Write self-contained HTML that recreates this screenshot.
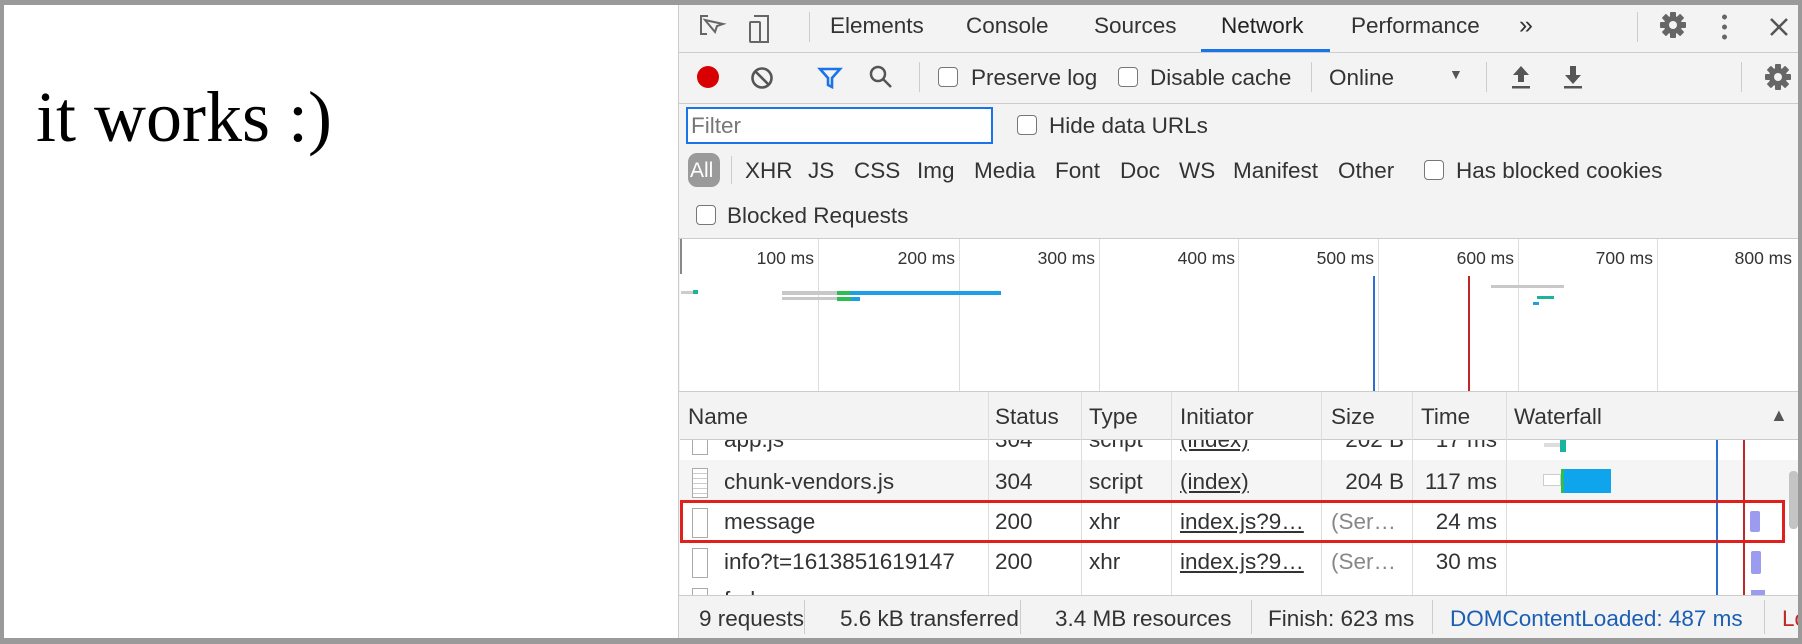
<!DOCTYPE html>
<html><head><meta charset="utf-8"><style>
*{margin:0;padding:0;box-sizing:border-box}
body{width:1802px;height:644px;position:relative;overflow:hidden;background:#fff;font-family:"Liberation Sans",Arial,sans-serif;color:#333;font-size:22.5px}
.a{position:absolute;white-space:nowrap}
.t{line-height:24px}
.cb{position:absolute;width:20px;height:20px;border:1.5px solid #777;border-radius:4px;background:#fff}
.hl{position:absolute;height:1px;background:#ccc}
.vl{position:absolute;width:1px;background:#ccc}
</style></head><body>
<svg width="0" height="0" style="position:absolute"><defs><g id="gear"><g fill="#666"><circle cx="14" cy="14" r="9"/><rect x="11" y="1" width="6" height="26" rx="1"/><rect x="11" y="1" width="6" height="26" rx="1" transform="rotate(45 14 14)"/><rect x="11" y="1" width="6" height="26" rx="1" transform="rotate(90 14 14)"/><rect x="11" y="1" width="6" height="26" rx="1" transform="rotate(135 14 14)"/></g><circle cx="14" cy="14" r="4" fill="#f3f3f3"/></g></defs></svg>
<!-- outer frame -->
<div class="a" style="left:0;top:0;width:1802px;height:644px;border:4px solid #9a9a9a;border-top-width:5px;border-bottom-width:6px"></div>
<div class="a" style="left:36px;top:76px;font-family:'Liberation Serif',serif;font-size:72px;color:#000;line-height:82px">it works :)</div>

<!-- devtools -->
<div class="a" style="left:678px;top:5px;width:1120px;height:633px;background:#f3f3f3;border-left:1px solid #ccc"></div>
<svg class="a" style="left:696px;top:12px" width="90" height="34" viewBox="0 0 90 34" fill="none" stroke="#666" stroke-width="2"><path d="M12 4H5v18h6M9 8l10 12 2-6 6-2z"/><rect x="54" y="10" width="10" height="20" rx="1"/><path d="M58 4h14v26H64"/></svg>
<div class="vl" style="left:809px;top:12px;height:30px;background:#ccc"></div>
<div class="a t" style="left:830px;top:14px">Elements</div>
<div class="a t" style="left:966px;top:14px">Console</div>
<div class="a t" style="left:1094px;top:14px">Sources</div>
<div class="a t" style="left:1221px;top:14px;color:#222">Network</div>
<div class="a t" style="left:1351px;top:14px">Performance</div>
<div class="a t" style="left:1519px;top:13px;font-size:25px">»</div>
<div class="a" style="left:1201px;top:49px;width:129px;height:3px;background:#1a73e8"></div>
<div class="vl" style="left:1637px;top:12px;height:30px"></div>
<svg class="a" style="left:1659px;top:11px" width="28" height="28"><use href="#gear"/></svg>
<div class="a" style="left:1722px;top:12px;width:5px;height:30px;background:radial-gradient(circle,#666 2.3px,transparent 2.6px) 0 0/5px 10px"></div>
<svg class="a" style="left:1768px;top:16px" width="22" height="22" stroke="#555" stroke-width="2.5"><path d="M3 3L19 19M19 3L3 19"/></svg>
<div class="hl" style="left:679px;top:52px;width:1119px"></div>

<!-- toolbar 2 -->
<div class="a" style="left:697px;top:66px;width:22px;height:22px;border-radius:50%;background:#d80000"></div>
<svg class="a" style="left:750px;top:66px" width="24" height="24" fill="none" stroke="#555" stroke-width="2.6"><circle cx="12" cy="12" r="9.5"/><path d="M5.5 5.5l13 13"/></svg>
<svg class="a" style="left:817px;top:65px" width="26" height="26" fill="none" stroke="#1a73e8" stroke-width="2.6"><path d="M3 4h20l-8 9v9l-4-2v-7z"/></svg>
<svg class="a" style="left:868px;top:64px" width="26" height="26" fill="none" stroke="#555" stroke-width="2.5"><circle cx="10" cy="10" r="7"/><path d="M15 15l8 8"/></svg>
<div class="vl" style="left:919px;top:62px;height:30px"></div>
<div class="cb" style="left:938px;top:67px"></div><div class="a t" style="left:971px;top:66px">Preserve log</div>
<div class="cb" style="left:1118px;top:67px"></div><div class="a t" style="left:1150px;top:66px">Disable cache</div>
<div class="vl" style="left:1311px;top:62px;height:30px"></div>
<div class="a t" style="left:1329px;top:66px">Online</div>
<div class="a" style="left:1449px;top:66px;font-size:14px;color:#555">▼</div>
<div class="vl" style="left:1486px;top:62px;height:30px"></div>
<svg class="a" style="left:1509px;top:64px" width="24" height="26" fill="#555"><path d="M12 2l8 9h-5v7H9v-7H4z"/><rect x="3" y="22" width="18" height="2.5"/></svg>
<svg class="a" style="left:1561px;top:64px" width="24" height="26" fill="#555"><path d="M12 20l8-9h-5V2H9v9H4z"/><rect x="3" y="22" width="18" height="2.5"/></svg>
<div class="vl" style="left:1741px;top:62px;height:30px"></div>
<svg class="a" style="left:1764px;top:63px" width="28" height="28"><use href="#gear"/></svg>
<div class="hl" style="left:679px;top:103px;width:1119px"></div>

<!-- filter row -->
<div class="a" style="left:686px;top:107px;width:307px;height:37px;border:2px solid #1a73e8;background:#fff"></div>
<div class="a t" style="left:691px;top:114px;color:#777">Filter</div>
<div class="cb" style="left:1017px;top:115px"></div><div class="a t" style="left:1049px;top:114px">Hide data URLs</div>

<div class="a" style="left:688px;top:153px;width:32px;height:34px;border-radius:9px;background:#9a9a9a"></div>
<div class="a t" style="left:690px;top:159px;color:#fff;font-size:21px">All</div>
<div class="vl" style="left:731px;top:156px;height:28px"></div>
<div class="a t" style="left:745px;top:159px">XHR</div>
<div class="a t" style="left:808px;top:159px">JS</div>
<div class="a t" style="left:854px;top:159px">CSS</div>
<div class="a t" style="left:917px;top:159px">Img</div>
<div class="a t" style="left:974px;top:159px">Media</div>
<div class="a t" style="left:1055px;top:159px">Font</div>
<div class="a t" style="left:1120px;top:159px">Doc</div>
<div class="a t" style="left:1179px;top:159px">WS</div>
<div class="a t" style="left:1233px;top:159px">Manifest</div>
<div class="a t" style="left:1338px;top:159px">Other</div>
<div class="cb" style="left:1424px;top:160px"></div><div class="a t" style="left:1456px;top:159px">Has blocked cookies</div>
<div class="cb" style="left:696px;top:205px"></div><div class="a t" style="left:727px;top:204px">Blocked Requests</div>
<div class="hl" style="left:679px;top:238px;width:1119px"></div>

<!-- overview -->
<div class="a" style="left:680px;top:239px;width:1118px;height:152px;background:#fff"></div>
<div class="a" style="left:680px;top:239px;width:2px;height:35px;background:#888"></div>
<div class="vl" style="left:818px;top:239px;height:152px;background:#ddd"></div>
<div class="vl" style="left:959px;top:239px;height:152px;background:#ddd"></div>
<div class="vl" style="left:1099px;top:239px;height:152px;background:#ddd"></div>
<div class="vl" style="left:1238px;top:239px;height:152px;background:#ddd"></div>
<div class="vl" style="left:1378px;top:239px;height:152px;background:#ddd"></div>
<div class="vl" style="left:1518px;top:239px;height:152px;background:#ddd"></div>
<div class="vl" style="left:1657px;top:239px;height:152px;background:#ddd"></div>
<div class="a" style="top:248px;font-size:17.5px;line-height:20px;right:988px">100 ms</div>
<div class="a" style="top:248px;font-size:17.5px;line-height:20px;right:847px">200 ms</div>
<div class="a" style="top:248px;font-size:17.5px;line-height:20px;right:707px">300 ms</div>
<div class="a" style="top:248px;font-size:17.5px;line-height:20px;right:567px">400 ms</div>
<div class="a" style="top:248px;font-size:17.5px;line-height:20px;right:428px">500 ms</div>
<div class="a" style="top:248px;font-size:17.5px;line-height:20px;right:288px">600 ms</div>
<div class="a" style="top:248px;font-size:17.5px;line-height:20px;right:149px">700 ms</div>
<div class="a" style="top:248px;font-size:17.5px;line-height:20px;right:10px">800 ms</div>
<div class="a" style="left:681px;top:291px;width:12px;height:3px;background:#ccc"></div>
<div class="a" style="left:693px;top:290px;width:5px;height:4px;background:#1bb39b"></div>
<div class="a" style="left:782px;top:291px;width:55px;height:4px;background:#c8c8c8"></div>
<div class="a" style="left:837px;top:291px;width:13px;height:4px;background:#2dbd55"></div>
<div class="a" style="left:850px;top:291px;width:151px;height:4px;background:#1d9ee5"></div>
<div class="a" style="left:782px;top:297px;width:55px;height:3px;background:#c8c8c8"></div>
<div class="a" style="left:837px;top:297px;width:14px;height:4px;background:#2dbd55"></div>
<div class="a" style="left:851px;top:297px;width:9px;height:4px;background:#1d9ee5"></div>
<div class="a" style="left:1373px;top:276px;width:2px;height:115px;background:#2b6fd1"></div>
<div class="a" style="left:1468px;top:276px;width:2px;height:115px;background:#c0262a"></div>
<div class="a" style="left:1491px;top:285px;width:73px;height:3px;background:#c8c8c8"></div>
<div class="a" style="left:1537px;top:296px;width:17px;height:3px;background:#1bb39b"></div>
<div class="a" style="left:1533px;top:302px;width:6px;height:3px;background:#1d9ee5"></div>
<div class="hl" style="left:679px;top:391px;width:1119px"></div>

<!-- table -->
<div class="a" style="left:680px;top:392px;width:1118px;height:48px;background:#f3f3f3;border-bottom:1px solid #ccc"></div>
<div class="a" style="left:680px;top:440px;width:1118px;height:155px;background:#fff"></div>
<div class="a" style="left:680px;top:460px;width:1118px;height:40px;background:#f5f5f5"></div>
<div class="vl" style="left:988px;top:392px;height:203px;background:#ddd"></div>
<div class="vl" style="left:1081px;top:392px;height:203px;background:#ddd"></div>
<div class="vl" style="left:1171px;top:392px;height:203px;background:#ddd"></div>
<div class="vl" style="left:1321px;top:392px;height:203px;background:#ddd"></div>
<div class="vl" style="left:1412px;top:392px;height:203px;background:#ddd"></div>
<div class="vl" style="left:1506px;top:392px;height:203px;background:#ddd"></div>
<div class="a t" style="left:688px;top:405px">Name</div>
<div class="a t" style="left:995px;top:405px">Status</div>
<div class="a t" style="left:1089px;top:405px">Type</div>
<div class="a t" style="left:1180px;top:405px">Initiator</div>
<div class="a t" style="left:1331px;top:405px">Size</div>
<div class="a t" style="left:1421px;top:405px">Time</div>
<div class="a t" style="left:1514px;top:405px">Waterfall</div>
<div class="a" style="left:1770px;top:405px;font-size:18px;color:#555">▲</div>

<div class="a" style="left:680px;top:440px;width:1106px;height:155px;overflow:hidden">
 <div style="position:absolute;left:0;top:-20px;width:1106px;height:60px">
  <div class="a t" style="left:44px;top:8px">app.js</div>
  <div class="a t" style="left:315px;top:8px">304</div>
  <div class="a t" style="left:409px;top:8px">script</div>
  <div class="a t" style="left:500px;top:8px;text-decoration:underline">(index)</div>
  <div class="a t" style="right:382px;top:8px">202 B</div>
  <div class="a t" style="right:289px;top:8px">17 ms</div>
  <div class="a" style="left:12px;top:5px;width:16px;height:30px;border:1.5px solid #aaa"></div>
 </div>
 <div class="a" style="left:12px;top:28px;width:16px;height:30px;border:1.5px solid #aaa;background:repeating-linear-gradient(#fff 0 4px,#ccc 4px 5px)"></div>
 <div class="a t" style="left:44px;top:30px">chunk-vendors.js</div>
 <div class="a t" style="left:315px;top:30px">304</div>
 <div class="a t" style="left:409px;top:30px">script</div>
 <div class="a t" style="left:500px;top:30px;text-decoration:underline">(index)</div>
 <div class="a t" style="right:382px;top:30px">204 B</div>
 <div class="a t" style="right:289px;top:30px">117 ms</div>
 <div class="a" style="left:12px;top:68px;width:16px;height:30px;border:1.5px solid #aaa;background:#fff"></div>
 <div class="a t" style="left:44px;top:70px">message</div>
 <div class="a t" style="left:315px;top:70px">200</div>
 <div class="a t" style="left:409px;top:70px">xhr</div>
 <div class="a t" style="left:500px;top:70px;text-decoration:underline">index.js?9…</div>
 <div class="a t" style="left:651px;top:70px;color:#888">(Ser…</div>
 <div class="a t" style="right:289px;top:70px">24 ms</div>
 <div class="a" style="left:12px;top:108px;width:16px;height:30px;border:1.5px solid #aaa;background:#fff"></div>
 <div class="a t" style="left:44px;top:110px">info?t=1613851619147</div>
 <div class="a t" style="left:315px;top:110px">200</div>
 <div class="a t" style="left:409px;top:110px">xhr</div>
 <div class="a t" style="left:500px;top:110px;text-decoration:underline">index.js?9…</div>
 <div class="a t" style="left:651px;top:110px;color:#888">(Ser…</div>
 <div class="a t" style="right:289px;top:110px">30 ms</div>
 <div class="a" style="left:12px;top:148px;width:16px;height:30px;border:1.5px solid #aaa;background:#fff"></div>
 <div class="a t" style="left:44px;top:148px">fork.png</div>
 <div class="a" style="left:1036px;top:0;width:2px;height:155px;background:#2b6fd1"></div>
 <div class="a" style="left:1063px;top:0;width:2px;height:155px;background:#c0262a"></div>
 <div class="a" style="left:864px;top:3px;width:17px;height:4px;background:#ddd"></div>
 <div class="a" style="left:880px;top:0;width:6px;height:12px;background:#1bb39b"></div>
 <div class="a" style="left:863px;top:34px;width:18px;height:12px;border:1px solid #ccc;background:#fff"></div>
 <div class="a" style="left:881px;top:29px;width:3px;height:24px;background:#2dbd55"></div>
 <div class="a" style="left:884px;top:29px;width:47px;height:24px;background:#0ea5ec"></div>
 <div class="a" style="left:1070px;top:71px;width:10px;height:21px;background:#9b9cf0;border-radius:2px"></div>
 <div class="a" style="left:1071px;top:111px;width:10px;height:23px;background:#9b9cf0;border-radius:2px"></div>
 <div class="a" style="left:1071px;top:150px;width:14px;height:10px;background:#9b9cf0"></div>
</div>
<div class="a" style="left:1789px;top:471px;width:9px;height:58px;background:#c4c4c4;border-radius:4px"></div>
<div class="a" style="left:680px;top:500px;width:1105px;height:43px;border:3px solid #e0201d"></div>

<!-- footer -->
<div class="hl" style="left:679px;top:595px;width:1119px"></div>
<div class="a t" style="left:699px;top:607px">9 requests</div>
<div class="vl" style="left:804px;top:600px;height:34px"></div>
<div class="a t" style="left:840px;top:607px">5.6 kB transferred</div>
<div class="vl" style="left:1020px;top:600px;height:34px"></div>
<div class="a t" style="left:1055px;top:607px">3.4 MB resources</div>
<div class="vl" style="left:1251px;top:600px;height:34px"></div>
<div class="a t" style="left:1268px;top:607px">Finish: 623 ms</div>
<div class="vl" style="left:1432px;top:600px;height:34px"></div>
<div class="a t" style="left:1450px;top:607px;color:#1a5fb4">DOMContentLoaded: 487 ms</div>
<div class="vl" style="left:1764px;top:600px;height:34px"></div>
<div class="a t" style="left:1782px;top:607px;color:#c0262a;width:16px;overflow:hidden">Load</div>
</body></html>
